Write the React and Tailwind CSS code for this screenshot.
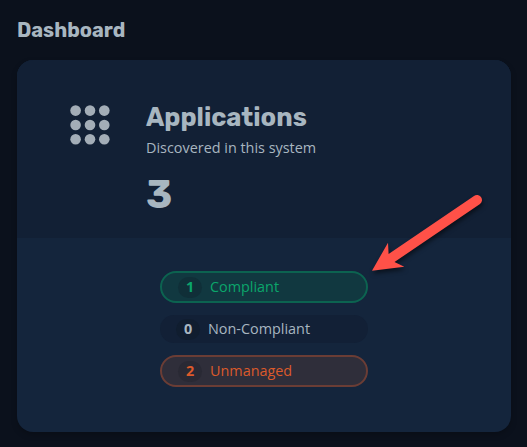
const statuses = [
  {
    count: 1,
    label: 'Compliant',
    pill: 'h-8 border-2 border-[#0c6350] bg-[#113840] pl-4 text-[#0ba66b]',
    badge: 'bg-[#102f38]',
  },
  {
    count: 0,
    label: 'Non-Compliant',
    pill: 'h-7 bg-[#122036] pl-4 text-[#a8b6c0]',
    badge: 'bg-[#101d2f]',
  },
  {
    count: 2,
    label: 'Unmanaged',
    pill: 'h-8 border-2 border-[#6b3d35] bg-[#2f2e3a] pl-4 text-[#dc5a2b]',
    badge: 'bg-[#292934]',
  },
];

function StatusPill({ status }) {
  return (
    <div className={`flex w-[208px] items-center rounded-full text-[14.4px] leading-5 ${status.pill}`}>
      <span className={`flex h-[21px] w-6 items-center justify-center rounded-full font-bold ${status.badge}`}>
        {status.count}
      </span>
      <span className="ml-2">{status.label}</span>
    </div>
  );
}

function GridIcon() {
  const steps = [5.6, 20, 34.3];
  return (
    <svg className="size-10" viewBox="0 0 40 40" fill="#a3adb7">
      {steps.map((y) => steps.map((x) => <circle key={`${x}-${y}`} cx={x} cy={y} r="5.3" />))}
    </svg>
  );
}

function Arrow() {
  return (
    <svg
      className="absolute left-[362px] top-[186px] h-[100px] w-[130px] drop-shadow-[1px_3px_2px_rgba(0,0,0,0.5)]"
      viewBox="362 186 130 100"
      fill="#ff5148"
    >
      <path d="M372 270.8 L388 242.7 L388.6 254 L474 196 A5 5 0 0 1 480 204 L394.5 262 L404.3 266.8 Z" />
    </svg>
  );
}

export default function App() {
  return (
    <div className="relative h-[447px] w-[527px] overflow-hidden bg-[#0b111c] px-[17px] pt-4 font-['Open_Sans','Noto_Sans',sans-serif] text-[#a8b6c0]">
      <h1 className="h-11 font-['Rubik','Inter',sans-serif] text-[20px] font-bold leading-[29px]">
        Dashboard
      </h1>
      <section className="h-[372px] w-[494px] overflow-hidden rounded-2xl bg-[#14253c] shadow-[0_3px_6px_rgba(0,0,0,0.2)]">
        <div className="flex h-[178px] bg-[#122035] pl-[53px]">
          <div className="pt-[45px]">
            <GridIcon />
          </div>
          <div className="ml-9 pt-[41px]">
            <h2 className="font-['Rubik','Inter',sans-serif] text-[25.6px] font-bold leading-8">Applications</h2>
            <p className="mt-[5px] text-[14.4px] leading-5">Discovered in this system</p>
            <p className="mt-3 font-['Rubik','Inter',sans-serif] text-[40px] font-bold leading-[50px]">3</p>
          </div>
        </div>
        <div className="flex flex-col items-center gap-3 pt-[33px]">
          {statuses.map((status) => (
            <StatusPill key={status.label} status={status} />
          ))}
        </div>
      </section>
      <Arrow />
    </div>
  );
}
